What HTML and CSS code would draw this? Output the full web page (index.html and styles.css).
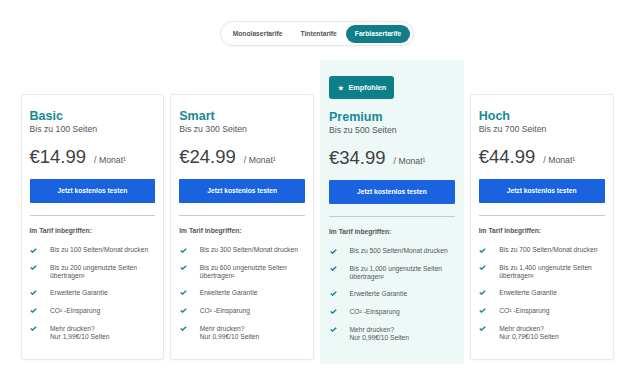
FILE: index.html
```html
<!DOCTYPE html>
<html lang="de">

<head>
    <meta charset="UTF-8">
    <meta name="viewport" content="width=device-width, initial-scale=1.0">
    <title>Tarife</title>
    <link rel="stylesheet" href="styles.css">
</head>

<body>

    <div class="switch">
        <div class="tabs">
            <div class="tab">Monolasertarife</div>
            <div class="tab">Tintentarife</div>
            <div class="tab active">Farblasertarife</div>
        </div>
    </div>

    <div class="plans">

        <!-- basic -->
        <div class="card">
            <h2 class="name">Basic</h2>
            <div class="pages">Bis zu 100 Seiten</div>
            <div class="price"><span class="amount">€14.99</span><span class="per">/ Monat¹</span></div>
            <a class="btn">Jetzt kostenlos testen</a>
            <div class="line"></div>
            <div class="incl">Im Tarif inbegriffen:</div>
            <ul class="feats">
                <li><svg class="tick" viewBox="0 0 14 10"><path d="M1.5 5 L5 8.2 L12.5 1.5" /></svg><span>Bis zu 100 Seiten/Monat drucken</span></li>
                <li><svg class="tick" viewBox="0 0 14 10"><path d="M1.5 5 L5 8.2 L12.5 1.5" /></svg><span>Bis zu 200 ungenutzte Seiten übertragen²</span></li>
                <li><svg class="tick" viewBox="0 0 14 10"><path d="M1.5 5 L5 8.2 L12.5 1.5" /></svg><span>Erweiterte Garantie</span></li>
                <li><svg class="tick" viewBox="0 0 14 10"><path d="M1.5 5 L5 8.2 L12.5 1.5" /></svg><span>CO² -Einsparung</span></li>
                <li><svg class="tick" viewBox="0 0 14 10"><path d="M1.5 5 L5 8.2 L12.5 1.5" /></svg><span>Mehr drucken?<br>Nur 1,99€/10 Seiten</span></li>
            </ul>
        </div>

        <!-- smart -->
        <div class="card">
            <h2 class="name">Smart</h2>
            <div class="pages">Bis zu 300 Seiten</div>
            <div class="price"><span class="amount">€24.99</span><span class="per">/ Monat¹</span></div>
            <a class="btn">Jetzt kostenlos testen</a>
            <div class="line"></div>
            <div class="incl">Im Tarif inbegriffen:</div>
            <ul class="feats">
                <li><svg class="tick" viewBox="0 0 14 10"><path d="M1.5 5 L5 8.2 L12.5 1.5" /></svg><span>Bis zu 300 Seiten/Monat drucken</span></li>
                <li><svg class="tick" viewBox="0 0 14 10"><path d="M1.5 5 L5 8.2 L12.5 1.5" /></svg><span>Bis zu 600 ungenutzte Seiten übertragen²</span></li>
                <li><svg class="tick" viewBox="0 0 14 10"><path d="M1.5 5 L5 8.2 L12.5 1.5" /></svg><span>Erweiterte Garantie</span></li>
                <li><svg class="tick" viewBox="0 0 14 10"><path d="M1.5 5 L5 8.2 L12.5 1.5" /></svg><span>CO² -Einsparung</span></li>
                <li><svg class="tick" viewBox="0 0 14 10"><path d="M1.5 5 L5 8.2 L12.5 1.5" /></svg><span>Mehr drucken?<br>Nur 0,99€/10 Seiten</span></li>
            </ul>
        </div>

        <!-- premium -->
        <div class="card best">
            <div class="badge">
                <svg class="star" viewBox="0 0 24 24"><path d="M12 1.5l3.3 6.8 7.4 1-5.4 5.2 1.3 7.4L12 18.4l-6.6 3.5 1.3-7.4L1.3 9.3l7.4-1z" /></svg>
                <span>Empfohlen</span>
            </div>
            <h2 class="name">Premium</h2>
            <div class="pages">Bis zu 500 Seiten</div>
            <div class="price"><span class="amount">€34.99</span><span class="per">/ Monat¹</span></div>
            <a class="btn">Jetzt kostenlos testen</a>
            <div class="line"></div>
            <div class="incl">Im Tarif inbegriffen:</div>
            <ul class="feats">
                <li><svg class="tick" viewBox="0 0 14 10"><path d="M1.5 5 L5 8.2 L12.5 1.5" /></svg><span>Bis zu 500 Seiten/Monat drucken</span></li>
                <li><svg class="tick" viewBox="0 0 14 10"><path d="M1.5 5 L5 8.2 L12.5 1.5" /></svg><span>Bis zu 1,000 ungenutzte Seiten übertragen²</span></li>
                <li><svg class="tick" viewBox="0 0 14 10"><path d="M1.5 5 L5 8.2 L12.5 1.5" /></svg><span>Erweiterte Garantie</span></li>
                <li><svg class="tick" viewBox="0 0 14 10"><path d="M1.5 5 L5 8.2 L12.5 1.5" /></svg><span>CO² -Einsparung</span></li>
                <li><svg class="tick" viewBox="0 0 14 10"><path d="M1.5 5 L5 8.2 L12.5 1.5" /></svg><span>Mehr drucken?<br>Nur 0,99€/10 Seiten</span></li>
            </ul>
        </div>

        <!-- hoch -->
        <div class="card">
            <h2 class="name">Hoch</h2>
            <div class="pages">Bis zu 700 Seiten</div>
            <div class="price"><span class="amount">€44.99</span><span class="per">/ Monat¹</span></div>
            <a class="btn">Jetzt kostenlos testen</a>
            <div class="line"></div>
            <div class="incl">Im Tarif inbegriffen:</div>
            <ul class="feats">
                <li><svg class="tick" viewBox="0 0 14 10"><path d="M1.5 5 L5 8.2 L12.5 1.5" /></svg><span>Bis zu 700 Seiten/Monat drucken</span></li>
                <li><svg class="tick" viewBox="0 0 14 10"><path d="M1.5 5 L5 8.2 L12.5 1.5" /></svg><span>Bis zu 1,400 ungenutzte Seiten übertragen²</span></li>
                <li><svg class="tick" viewBox="0 0 14 10"><path d="M1.5 5 L5 8.2 L12.5 1.5" /></svg><span>Erweiterte Garantie</span></li>
                <li><svg class="tick" viewBox="0 0 14 10"><path d="M1.5 5 L5 8.2 L12.5 1.5" /></svg><span>CO² -Einsparung</span></li>
                <li><svg class="tick" viewBox="0 0 14 10"><path d="M1.5 5 L5 8.2 L12.5 1.5" /></svg><span>Mehr drucken?<br>Nur 0,79€/10 Seiten</span></li>
            </ul>
        </div>

    </div>

</body>

</html>
```

FILE: styles.css
```css
body {
    margin: 0;
    background-color: #ffffff;
    font-family: 'Liberation Sans', Arial, sans-serif;
    color: #555555;
}

/* tariff switch */
.switch {
    display: flex;
    justify-content: center;
    padding-top: 21px;
}

.tabs {
    display: flex;
    padding: 2.5px;
    border: 1px solid #e6e6e6;
    border-radius: 20px;
    box-shadow: 0 1px 3px rgba(0, 0, 0, 0.04);
}

.tab {
    padding: 0px 9px;
    height: 18px;
    line-height: 18px;
    font-size: 6.7px;
    font-weight: bold;
    color: #555555;
    border-radius: 10px;
    cursor: pointer;
}

.tab.active {
    background-color: #0f7e88;
    color: white;
}

/* cards */
.plans {
    display: grid;
    grid-template-columns: repeat(4, 1fr);
    column-gap: 6px;
    align-items: start;
    width: 593px;
    margin: 14px auto 0px auto;
}

.card {
    margin-top: 34px;
    padding: 14px 8px 18px 8px;
    border: 1px solid #e8e8e8;
    border-radius: 3px;
    background-color: #ffffff;
    box-shadow: 0 1px 2px rgba(0, 0, 0, 0.03);
}

.card.best {
    margin-top: 0px;
    padding-top: 15px;
    padding-bottom: 21px;
    background-color: #eef8f7;
    border-color: #eef8f7;
    box-shadow: none;
}

.badge {
    display: flex;
    align-items: center;
    gap: 5px;
    width: fit-content;
    height: 23px;
    padding: 0px 8px 0px 8.5px;
    margin-bottom: 11px;
    background-color: #0d7f89;
    color: white;
    border-radius: 3px;
    font-size: 7.3px;
    font-weight: bold;
}

.star {
    width: 6px;
    height: 6px;
    fill: white;
}

.name {
    margin: 0;
    font-size: 12.5px;
    line-height: 15px;
    font-weight: bold;
    color: #178a96;
}

.pages {
    font-size: 8.7px;
    line-height: 11px;
}

.price {
    display: flex;
    align-items: baseline;
    gap: 8px;
    margin-top: 11px;
}

.amount {
    font-size: 18.5px;
    line-height: 22px;
    color: #3f3f3f;
}

.per {
    font-size: 8.7px;
}

.btn {
    display: block;
    margin-top: 11px;
    height: 24px;
    line-height: 24px;
    background-color: #1a63df;
    color: white;
    text-align: center;
    font-size: 6.7px;
    font-weight: bold;
    border-radius: 1px;
    cursor: pointer;
}

.line {
    margin-top: 12px;
    border-top: 1px solid #c9c9c9;
}

.incl {
    margin-top: 10px;
    font-size: 6.7px;
    line-height: 9px;
    font-weight: bold;
}

.feats {
    display: flex;
    flex-direction: column;
    gap: 8.6px;
    list-style: none;
    margin: 11px 0px 0px 0px;
    padding: 0;
}

.feats li {
    display: flex;
    min-height: 9.4px;
    font-size: 6.7px;
    line-height: 8px;
}

.tick {
    flex: none;
    width: 7px;
    height: 5px;
    margin: 1.5px 13px 0px 0.5px;
    fill: none;
    stroke: #178a96;
    stroke-width: 3;
}
```
